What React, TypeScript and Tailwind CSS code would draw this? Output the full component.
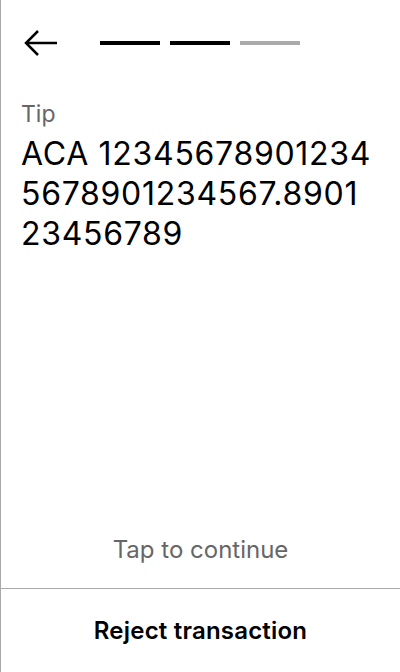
export default function App() {
  return (
    <main
      className="w-[400px] h-[672px] flex flex-col bg-white border-l border-[#aaaaaa] text-black"
      style={{ fontFamily: "Inter, 'Noto Sans', sans-serif" }}
    >
      <header className="flex items-center h-[86px] pl-[23px]">
        <button className="w-[34px] h-[28px] flex items-center">
          <svg width="34" height="28" viewBox="0 0 34 28" fill="none" stroke="black" strokeWidth="2.5">
            <path d="M33 14H3" />
            <path d="M14 2L2 14L14 26" />
          </svg>
        </button>
        <div className="flex gap-[10px] ml-[42px]">
          <div className="w-[60px] h-[4px] bg-black" />
          <div className="w-[60px] h-[4px] bg-black" />
          <div className="w-[60px] h-[4px] bg-[#aaaaaa]" />
        </div>
      </header>

      <section className="pl-[20px] pr-[26px] pt-[14px]">
        <p className="text-[23px] leading-[28px] text-[#666666]">Tip</p>
        <p className="text-[32px] leading-[40px] tracking-[0.7px] mt-[6px] break-all">
          ACA 123456789012345678901234567.890123456789
        </p>
      </section>

      <div className="flex-1" />

      <p className="text-center text-[24px] leading-[28px] text-[#666666] pb-[24px]">
        Tap to continue
      </p>
      <button className="h-[84px] border-t border-[#aaaaaa] text-[24px] tracking-[0.2px] font-semibold">
        Reject transaction
      </button>
    </main>
  );
}
